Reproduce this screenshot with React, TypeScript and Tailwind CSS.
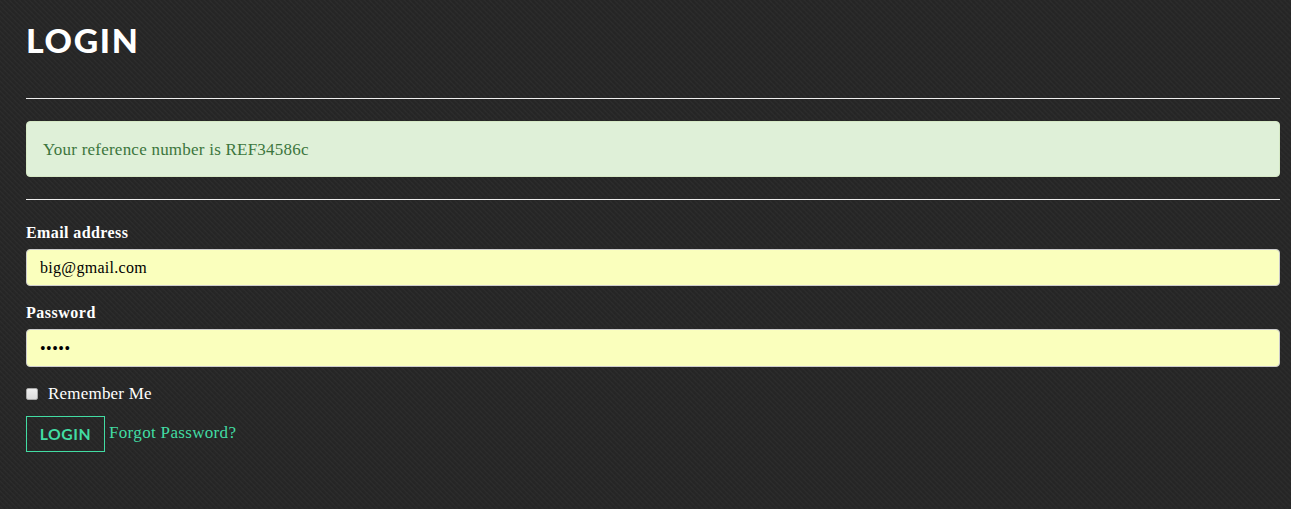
import React from "react";

const label = "block h-[22px] text-[16px] font-bold leading-[22px] text-white";
const field =
  "block w-full rounded-[4px] border border-[#cccccc] bg-[#faffbd] px-[13px] text-black outline-none";

export default function App() {
  return (
    <main className="h-[509px] w-full overflow-hidden bg-[#292929] bg-[repeating-linear-gradient(45deg,#00000018_0px,#00000006_1.4px,#ffffff05_2.1px,#00000018_3.536px),repeating-linear-gradient(135deg,#0000000a_0px,transparent_2.8px,#0000000a_5.657px)] pl-[26px] pr-[11px] font-['Liberation_Serif',serif] text-[16.5px] text-white">
      <h1 className="h-[98px] pt-[21px] font-['Lato',sans-serif] text-[32.5px] font-black leading-[40px] tracking-[1.6px]">
        <span className="inline-block origin-left scale-x-[1.04]">LOGIN</span>
      </h1>
      <hr className="h-px border-0 bg-[#eeeeee]" />
      <div className="mt-[22px] flex h-[56px] items-center rounded-[4px] border border-[#d6e9c6] bg-[#dff0d8] px-4 pt-[2px] text-[#3c763d]">
        <span className="tracking-[0.23px] text-[17px]">Your reference number is REF34586c</span>
      </div>
      <hr className="mt-[22px] h-px border-0 bg-[#eeeeee]" />
      <form onSubmit={(e) => e.preventDefault()}>
        <label htmlFor="email" className={`${label} mt-[22px]`}>
          <span className="tracking-[0.4px]">Email address</span>
        </label>
        <input
          id="email"
          type="email"
          defaultValue="big@gmail.com"
          className={`${field} mt-[5px] h-[37px] text-[16px] tracking-[0.3px]`}
        />
        <label htmlFor="password" className={`${label} mt-[16px]`}>
          <span className="tracking-[0.5px]">Password</span>
        </label>
        <input
          id="password"
          type="password"
          defaultValue="login"
          className={`${field} mt-[5px] h-[38px] pt-[1px] text-[16px] tracking-[0.5px]`}
        />
        <label className="mt-[16px] flex h-[22px] items-center">
          <input
            type="checkbox"
            className="mr-[10px] size-[12px] appearance-none rounded-[2px] border border-[#a8a8a8] bg-linear-to-b from-[#eeeeee] to-[#dcdcdc]"
          />
          <span className="text-[17px] tracking-[0.2px]">Remember Me</span>
        </label>
        <div className="mt-[11px] flex items-start">
          <button className="h-[36px] w-[79px] border border-[#42dca3] font-['Lato',sans-serif] text-[15px] font-bold tracking-[0.5px] text-[#42dca3]">
            <span className="inline-block scale-x-[1.05]">LOGIN</span>
          </button>
          <a href="#" className="ml-[4px] mt-[6px] text-[17px] leading-[22px] tracking-[0.33px] text-[#42dca3]">
            Forgot Password?
          </a>
        </div>
      </form>
    </main>
  );
}
